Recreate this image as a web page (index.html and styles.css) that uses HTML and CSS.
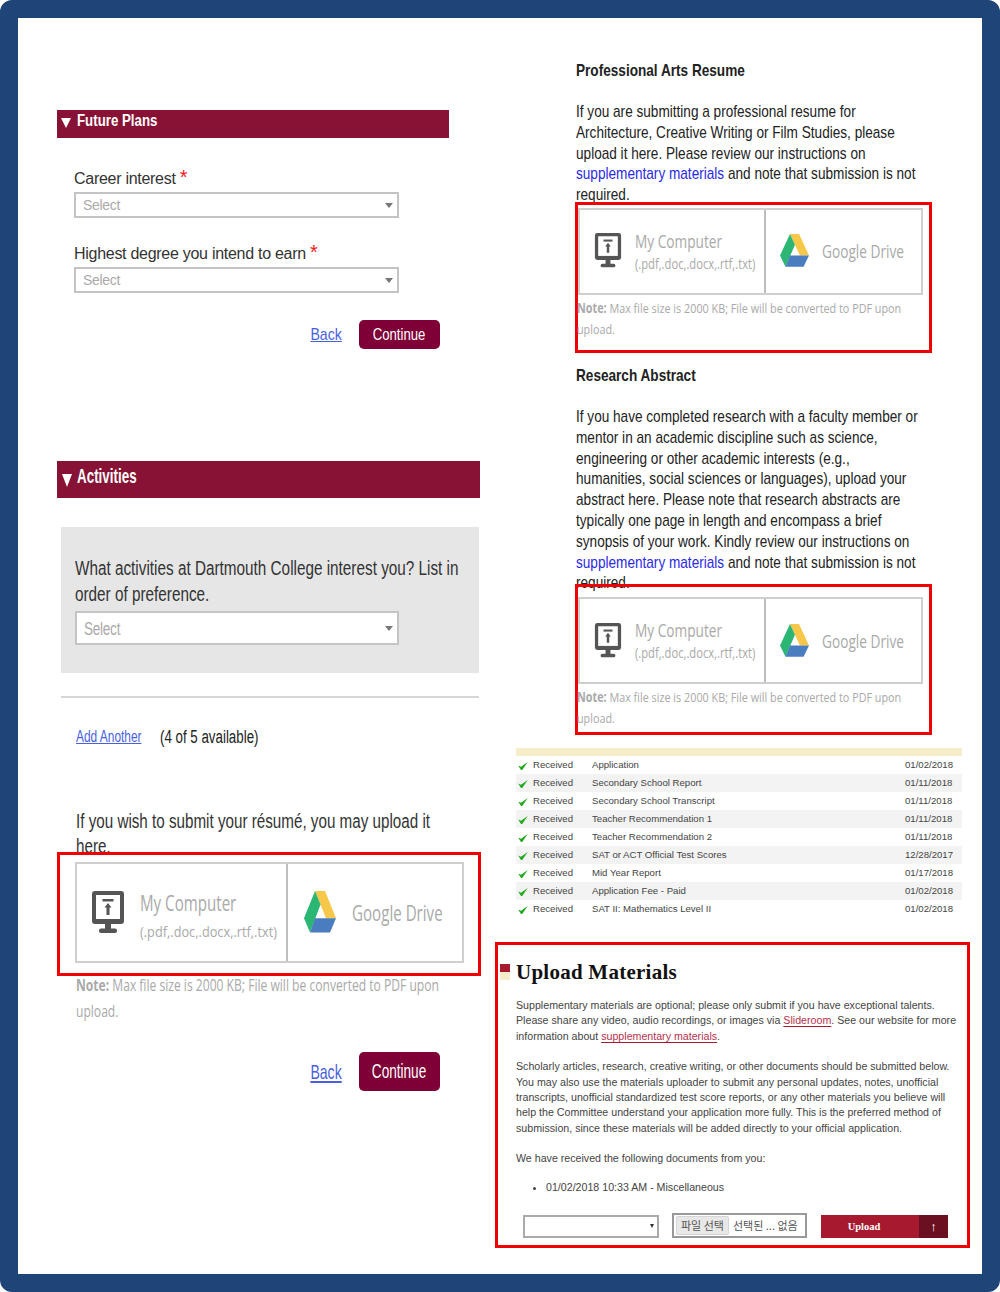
FILE: index.html
```html
<!DOCTYPE html>
<html lang="en">
<head>
    <meta charset="utf-8">
    <title>Application Materials</title>
    <link rel="stylesheet" href="styles.css">
</head>
<body>
<div class="frame">
    <!-- Left column: Common App style sections -->
    <div class="col-left">
        <div class="plans">
            <div class="bar bar-small"><i class="tri"></i><span>Future Plans</span></div>
            <div class="field-label first">Career interest <span class="req">*</span></div>
            <div class="select"><span>Select</span><i class="caret"></i></div>
            <div class="field-label second">Highest degree you intend to earn <span class="req">*</span></div>
            <div class="select"><span>Select</span><i class="caret"></i></div>
            <div class="actions">
                <a class="back" href="#">Back</a>
                <button class="continue"><span>Continue</span></button>
            </div>
        </div>

        <div class="activities">
            <div class="bar bar-big"><i class="tri"></i><span>Activities</span></div>
            <div class="panel">
                <p>What activities at Dartmouth College interest you? List in<br>order of preference.</p>
                <div class="select select-big"><span>Select</span><i class="caret"></i></div>
            </div>
            <hr class="divider">
            <div class="add-row">
                <a href="#">Add Another</a>
                <span>(4 of 5 available)</span>
            </div>
            <p class="resume-ask">If you wish to submit your résumé, you may upload it<br>here.</p>
            <div class="red-box red-left">
                <div class="widget widget-big">
                    <div class="w-cell w-computer">
                        <svg class="ic-monitor" viewBox="0 0 32 44"><rect width="32" height="33" rx="3" fill="#555"/><rect x="4" y="4" width="24" height="24" fill="#fff"/><rect x="10.5" y="8" width="11" height="2.5" fill="#555"/><path d="M16 12l3.500 4.500h-2V24h-3v-7.500h-2z" fill="#555"/><rect x="13" y="33" width="6" height="5" fill="#555"/><rect x="7" y="37.500" width="18" height="4.500" rx="2" fill="#555"/></svg>
                        <div class="w-text"><div class="w-name">My Computer</div><div class="w-ext">(.pdf,.doc,.docx,.rtf,.txt)</div></div>
                    </div>
                    <div class="w-cell w-drive">
                        <svg class="ic-drive" viewBox="0 0 32 30" preserveAspectRatio="none"><path d="M11 0h10l11 19H22z" fill="#f7c74a"/><path d="M11 0l5.500 9.500L6 29l-6-10z" fill="#2bb673"/><path d="M11 19h21l-6 10H6z" fill="#4a7dbf"/></svg>
                        <div class="w-name">Google Drive</div>
                    </div>
                </div>
            </div>
            <p class="note note-big"><b>Note:</b> Max file size is 2000 KB; File will be converted to PDF upon<br>upload.</p>
            <div class="actions actions-big">
                <a class="back" href="#">Back</a>
                <button class="continue"><span>Continue</span></button>
            </div>
        </div>
    </div>

    <!-- Right column -->
    <div class="col-right">
        <div class="resume">
            <h3>Professional Arts Resume</h3>
            <p>If you are submitting a professional resume for<br>Architecture, Creative Writing or Film Studies, please<br>upload it here. Please review our instructions on<br><a href="#">supplementary materials</a> and note that submission is not<br>required.</p>
        </div>
        <div class="red-box red-right">
            <div class="widget">
                <div class="w-cell w-computer">
                    <svg class="ic-monitor" viewBox="0 0 32 44"><rect width="32" height="33" rx="3" fill="#555"/><rect x="4" y="4" width="24" height="24" fill="#fff"/><rect x="10.5" y="8" width="11" height="2.500" fill="#555"/><path d="M16 12l3.500 4.500h-2V24h-3v-7.500h-2z" fill="#555"/><rect x="13" y="33" width="6" height="5" fill="#555"/><rect x="7" y="37.500" width="18" height="4.500" rx="2" fill="#555"/></svg>
                    <div class="w-text"><div class="w-name">My Computer</div><div class="w-ext">(.pdf,.doc,.docx,.rtf,.txt)</div></div>
                </div>
                <div class="w-cell w-drive">
                    <svg class="ic-drive" viewBox="0 0 32 30" preserveAspectRatio="none"><path d="M11 0h10l11 19H22z" fill="#f7c74a"/><path d="M11 0l5.500 9.500L6 29l-6-10z" fill="#2bb673"/><path d="M11 19h21l-6 10H6z" fill="#4a7dbf"/></svg>
                    <div class="w-name">Google Drive</div>
                </div>
            </div>
            <p class="note"><b>Note:</b> Max file size is 2000 KB; File will be converted to PDF upon<br>upload.</p>
        </div>

        <div class="resume abstract">
            <h3>Research Abstract</h3>
            <p>If you have completed research with a faculty member or<br>mentor in an academic discipline such as science,<br>engineering or other academic interests (e.g.,<br>humanities, social sciences or languages), upload your<br>abstract here. Please note that research abstracts are<br>typically one page in length and encompass a brief<br>synopsis of your work. Kindly review our instructions on<br><a href="#">supplementary materials</a> and note that submission is not<br>required.</p>
        </div>
        <div class="red-box red-right red-second">
            <div class="widget">
                <div class="w-cell w-computer">
                    <svg class="ic-monitor" viewBox="0 0 32 44"><rect width="32" height="33" rx="3" fill="#555"/><rect x="4" y="4" width="24" height="24" fill="#fff"/><rect x="10.5" y="8" width="11" height="2.500" fill="#555"/><path d="M16 12l3.500 4.500h-2V24h-3v-7.500h-2z" fill="#555"/><rect x="13" y="33" width="6" height="5" fill="#555"/><rect x="7" y="37.500" width="18" height="4.500" rx="2" fill="#555"/></svg>
                    <div class="w-text"><div class="w-name">My Computer</div><div class="w-ext">(.pdf,.doc,.docx,.rtf,.txt)</div></div>
                </div>
                <div class="w-cell w-drive">
                    <svg class="ic-drive" viewBox="0 0 32 30" preserveAspectRatio="none"><path d="M11 0h10l11 19H22z" fill="#f7c74a"/><path d="M11 0l5.500 9.500L6 29l-6-10z" fill="#2bb673"/><path d="M11 19h21l-6 10H6z" fill="#4a7dbf"/></svg>
                    <div class="w-name">Google Drive</div>
                </div>
            </div>
            <p class="note"><b>Note:</b> Max file size is 2000 KB; File will be converted to PDF upon<br>upload.</p>
        </div>

        <table class="docs">
            <thead><tr><th colspan="4"></th></tr></thead>
            <tbody>
                <tr><td class="chk"><svg viewBox="0 0 12 10"><path d="M0 4.500L3.500 6 12 0 5 10H3.500z" fill="#22a81c"/></svg></td><td class="st">Received</td><td>Application</td><td class="dt">01/02/2018</td></tr>
                <tr><td class="chk"><svg viewBox="0 0 12 10"><path d="M0 4.500L3.500 6 12 0 5 10H3.500z" fill="#22a81c"/></svg></td><td class="st">Received</td><td>Secondary School Report</td><td class="dt">01/11/2018</td></tr>
                <tr><td class="chk"><svg viewBox="0 0 12 10"><path d="M0 4.500L3.500 6 12 0 5 10H3.500z" fill="#22a81c"/></svg></td><td class="st">Received</td><td>Secondary School Transcript</td><td class="dt">01/11/2018</td></tr>
                <tr><td class="chk"><svg viewBox="0 0 12 10"><path d="M0 4.500L3.500 6 12 0 5 10H3.500z" fill="#22a81c"/></svg></td><td class="st">Received</td><td>Teacher Recommendation 1</td><td class="dt">01/11/2018</td></tr>
                <tr><td class="chk"><svg viewBox="0 0 12 10"><path d="M0 4.500L3.500 6 12 0 5 10H3.500z" fill="#22a81c"/></svg></td><td class="st">Received</td><td>Teacher Recommendation 2</td><td class="dt">01/11/2018</td></tr>
                <tr><td class="chk"><svg viewBox="0 0 12 10"><path d="M0 4.500L3.500 6 12 0 5 10H3.500z" fill="#22a81c"/></svg></td><td class="st">Received</td><td>SAT or ACT Official Test Scores</td><td class="dt">12/28/2017</td></tr>
                <tr><td class="chk"><svg viewBox="0 0 12 10"><path d="M0 4.500L3.500 6 12 0 5 10H3.500z" fill="#22a81c"/></svg></td><td class="st">Received</td><td>Mid Year Report</td><td class="dt">01/17/2018</td></tr>
                <tr><td class="chk"><svg viewBox="0 0 12 10"><path d="M0 4.500L3.500 6 12 0 5 10H3.500z" fill="#22a81c"/></svg></td><td class="st">Received</td><td>Application Fee - Paid</td><td class="dt">01/02/2018</td></tr>
                <tr><td class="chk"><svg viewBox="0 0 12 10"><path d="M0 4.500L3.500 6 12 0 5 10H3.500z" fill="#22a81c"/></svg></td><td class="st">Received</td><td>SAT II: Mathematics Level II</td><td class="dt">01/02/2018</td></tr>
            </tbody>
        </table>

        <div class="upload">
            <h2><i class="marker"></i>Upload Materials</h2>
            <p>Supplementary materials are optional; please only submit if you have exceptional talents.<br>Please share any video, audio recordings, or images via <a href="#">Slideroom</a>. See our website for more<br>information about <a href="#">supplementary materials</a>.</p>
            <p>Scholarly articles, research, creative writing, or other documents should be submitted below.<br>You may also use the materials uploader to submit any personal updates, notes, unofficial<br>transcripts, unofficial standardized test score reports, or any other materials you believe will<br>help the Committee understand your application more fully. This is the preferred method of<br>submission, since these materials will be added directly to your official application.</p>
            <p>We have received the following documents from you:</p>
            <ul><li>01/02/2018 10:33 AM - Miscellaneous</li></ul>
            <div class="up-controls">
                <div class="up-select"><i class="up-caret"></i></div>
                <div class="up-file"><span class="up-choose">파일 선택</span><span>선택된 ... 없음</span></div>
                <div class="up-btn"><span class="up-label">Upload</span><span class="up-arrow">↑</span></div>
            </div>
        </div>
    </div>
</div>
</body>
</html>
```

FILE: styles.css
```css
* {
    box-sizing: border-box;
}
html, body {
    margin: 0;
    padding: 0;
}
body {
    width: 1000px;
    height: 1292px;
    overflow: hidden;
    background: #fff;
    font-family: "Liberation Sans", Arial, sans-serif;
    color: #222;
}
a {
    color: #2a2ae6;
}
p {
    margin: 0;
}

.frame {
    width: 1000px;
    height: 1292px;
    border: 18px solid #1f4578;
    border-radius: 12px;
    background: #fff;
    display: flex;
}

/* left column */
.col-left {
    width: 477px;
    padding: 92px 0 0 39px;
    flex: none;
}
.bar {
    background: #881235;
    color: #fff;
    font-weight: bold;
    display: flex;
    white-space: nowrap;
}
.bar span {
    display: inline-block;
    transform-origin: left center;
}
.tri {
    width: 0;
    height: 0;
    flex: none;
    border-left: 5px solid transparent;
    border-right: 5px solid transparent;
    border-top: 10px solid #fff;
}
.bar-small {
    width: 392px;
    height: 28px;
    font-size: 16px;
    padding: 2px 0 0 4px;
    line-height: 18px;
}
.bar-small .tri {
    margin: 6px 6px 0 0;
}
.bar-small span {
    transform: scaleX(.83);
}
.field-label {
    margin: 0 0 2px 17px;
    font-size: 16px;
    line-height: 22px;
    letter-spacing: -0.28px;
    color: #333;
}
.field-label.first {
    margin-top: 30px;
}
.field-label.second {
    margin-top: 25px;
}
.req {
    color: #f01c1c;
    font-size: 20px;
    line-height: 14px;
}
.select {
    margin-left: 17px;
    width: 325px;
    height: 26px;
    border: 2px solid #c4c4c4;
    background: #fff;
    display: flex;
    align-items: center;
    justify-content: space-between;
    padding: 0 4px 0 7px;
    font-size: 14px;
    letter-spacing: -0.3px;
    color: #aaa;
}
.caret {
    width: 0;
    height: 0;
    border-left: 4px solid transparent;
    border-right: 4px solid transparent;
    border-top: 5px solid #777;
}
.actions {
    display: flex;
    align-items: center;
    justify-content: flex-end;
    gap: 17px;
    width: 383px;
    margin-top: 27px;
}
.back {
    display: inline-block;
    font-size: 17px;
    color: #4a5fe0;
    transform: scaleX(.83);
    transform-origin: right center;
}
.continue {
    width: 81px;
    height: 29px;
    background: #7f0037;
    color: #fff;
    border: none;
    border-radius: 5px;
    font: 16px "Liberation Sans", Arial, sans-serif;
    padding: 0;
}
.continue span {
    display: inline-block;
    transform: scaleX(.82);
}

.activities {
    margin-top: 112px;
}
.bar-big {
    width: 423px;
    height: 37px;
    font-size: 20px;
    align-items: center;
    padding: 0 0 6px 5px;
}
.bar-big .tri {
    margin: 8px 5px 0 0;
    border-top-width: 13px;
}
.bar-big span {
    transform: scaleX(.67);
}
.panel {
    margin: 29px 0 0 4px;
    width: 418px;
    height: 146px;
    background: #e6e6e6;
    padding: 29px 0 0 14px;
    font-size: 20px;
    line-height: 25.500px;
    color: #333;
}
.panel p {
    white-space: nowrap;
    transform: scaleX(.765);
    transform-origin: left center;
}
.select-big {
    margin: 4px 0 0 0;
    width: 324px;
    height: 34px;
    font-size: 18px;
}
.select-big span {
    display: inline-block;
    padding-top: 3px;
    transform: scaleX(.75);
    transform-origin: left center;
}
.divider {
    margin: 23px 0 0 4px;
    width: 418px;
    height: 2px;
    border: none;
    background: #d6d6d6;
}
.add-row {
    margin: 27px 0 0 19px;
    display: flex;
    font-size: 18px;
    line-height: 24px;
    white-space: nowrap;
}
.add-row a {
    width: 84px;
    flex: none;
    font-size: 17px;
    color: #4a5fe0;
    transform: scaleX(.7);
    transform-origin: left center;
}
.add-row span {
    transform: scaleX(.74);
    transform-origin: left center;
}
.resume-ask {
    margin: 60px 0 0 19px;
    white-space: nowrap;
    font-size: 20px;
    line-height: 25px;
    color: #333;
    transform: scaleX(.76);
    transform-origin: left center;
}

/* upload widget */
.red-box {
    border: 3px solid #f00000;
}
.red-left {
    width: 424px;
    height: 124px;
    margin-top: -7px;
    padding: 7px 0 0 15px;
    position: relative;
}
.red-right {
    width: 357px;
    height: 151px;
    margin: -4px 0 0 80px;
    padding: 3px 0 0 0;
    position: relative;
}
.red-second {
    height: 151px;
    margin-top: -10px;
    padding-top: 10px;
}
.widget {
    display: flex;
    width: 345px;
    height: 87px;
    border: 2px solid #cfcfcf;
    font-family: "Open Sans", sans-serif;
    color: #a9a9a9;
}
.widget-big {
    width: 389px;
    height: 101px;
}
.w-cell {
    display: flex;
    align-items: center;
    flex: none;
}
.w-computer {
    width: 186px;
    padding-left: 13px;
    border-right: 2px solid #bdbdbd;
}
.widget-big .w-computer {
    width: 211px;
    padding-left: 15px;
}
.ic-monitor {
    width: 30px;
    height: 36px;
    flex: none;
}
.widget-big .ic-monitor {
    width: 32px;
    height: 44px;
}
.w-text {
    margin-left: 12px;
    white-space: nowrap;
}
.widget-big .w-text {
    margin: 6px 0 0 16px;
}
.w-name {
    font-size: 18px;
    line-height: 24px;
    white-space: nowrap;
    transform: scaleX(.76);
    transform-origin: left center;
}
.widget-big .w-name {
    font-size: 21px;
    transform: scaleX(.72);
}
.w-ext {
    margin-top: 1px;
    font-size: 14px;
    line-height: 20px;
    transform: scaleX(.8);
    transform-origin: left center;
}
.widget-big .w-ext {
    font-size: 15px;
    transform: scaleX(.85);
    margin-top: 6px;
}
.w-drive {
    padding-left: 14px;
    gap: 13px;
}
.widget-big .w-drive {
    padding-left: 16px;
    gap: 16px;
}
.ic-drive {
    width: 29px;
    height: 34px;
    flex: none;
}
.widget-big .ic-drive {
    width: 32px;
    height: 43px;
}
.note {
    font-family: "Open Sans", sans-serif;
    font-size: 13.500px;
    line-height: 21px;
    white-space: nowrap;
    color: #a9a9a9;
    margin: 3px 0 0 -1px;
    transform: scaleX(.8);
    transform-origin: left center;
}
.note-big {
    margin: -4px 0 0 19px;
    font-size: 15.500px;
    line-height: 26px;
    transform: scaleX(.78);
}
.actions-big {
    margin-top: 28px;
}
.actions-big .continue {
    height: 39px;
    font-size: 20px;
}
.actions-big .continue span {
    transform: scaleX(.68);
}
.actions-big .back {
    font-size: 21px;
    transform: scaleX(.67);
}

/* right column */
.col-right {
    flex: none;
    width: 475px;
    padding-top: 43px;
}
.resume {
    margin-left: 81px;
    color: #222;
    white-space: nowrap;
    font-size: 17px;
    line-height: 20.800px;
    transform: scaleX(.8);
    transform-origin: left center;
}
.resume h3 {
    margin: 0 0 21px;
    font-size: 17px;
    line-height: 20px;
}
.resume a {
    text-decoration: none;
}
.abstract {
    margin-top: 13px;
}

.docs {
    margin: 13px 0 0 21px;
    width: 446px;
    border-collapse: collapse;
    font-size: 9.600px;
    color: #444;
}
.docs th {
    height: 8px;
    padding: 0;
    background: #f5edc9;
}
.docs td {
    height: 18px;
    padding: 0 0 1px;
}
.docs tbody tr:nth-child(even) {
    background: #f3f3f3;
}
.docs .chk {
    width: 17px;
    padding-left: 2px;
}
.docs .chk svg {
    width: 10px;
    height: 8px;
    display: block;
    margin-top: 3px;
}
.docs .st {
    width: 59px;
}
.docs .dt {
    width: 57px;
}

.upload {
    margin: 24px 0 0 0;
    width: 475px;
    height: 306px;
    border: 3px solid #f00000;
    padding: 14px 0 0 18px;
    font-size: 10.650px;
    line-height: 15.300px;
    white-space: nowrap;
    color: #444;
    position: relative;
}
.upload h2 {
    margin: 0 0 13px;
    font-family: "Liberation Serif", serif;
    font-size: 21px;
    line-height: 26px;
    letter-spacing: 0.25px;
    color: #111;
}
.marker {
    position: absolute;
    left: 2px;
    top: 19px;
    width: 10px;
    height: 16px;
    background: linear-gradient(#a6192e 50%, #f5edc9 50%);
}
.upload p {
    margin-bottom: 15.300px;
}
.upload a {
    color: #b5324f;
    text-decoration-color: #a6192e;
    text-underline-offset: 2px;
}
.upload ul {
    margin: -2px 0 0;
    padding-left: 30px;
}
.up-controls {
    display: flex;
    align-items: flex-start;
    margin: 18px 0 0 7px;
}
.up-select {
    width: 136px;
    height: 23px;
    margin-top: 2px;
    border: 2px solid #aaa;
    position: relative;
}
.up-caret {
    position: absolute;
    right: 3px;
    top: 7px;
    border-left: 2px solid transparent;
    border-right: 2px solid transparent;
    border-top: 4px solid #333;
}
.up-file {
    width: 135px;
    height: 25px;
    margin-left: 13px;
    border: 2px solid #999;
    display: flex;
    align-items: center;
    gap: 4px;
    padding-left: 2px;
    font-family: "Noto Sans CJK KR", sans-serif;
    font-size: 11px;
    color: #555;
    white-space: nowrap;
}
.up-choose {
    background: #e8e8e8;
    border: 1px solid #d5d5d5;
    border-radius: 2px;
    padding: 0 4px;
    line-height: 17px;
}
.up-btn {
    width: 127px;
    height: 23px;
    margin: 2px 0 0 14px;
    display: flex;
    background: #a6192e;
    color: #fff;
}
.up-label {
    width: 98px;
    padding-right: 12px;
    text-align: center;
    font-family: "Liberation Serif", serif;
    font-weight: bold;
    font-size: 10.500px;
    line-height: 23px;
}
.up-arrow {
    flex: 1;
    background: #6b1020;
    text-align: center;
    font-size: 13px;
    line-height: 23px;
}
```
